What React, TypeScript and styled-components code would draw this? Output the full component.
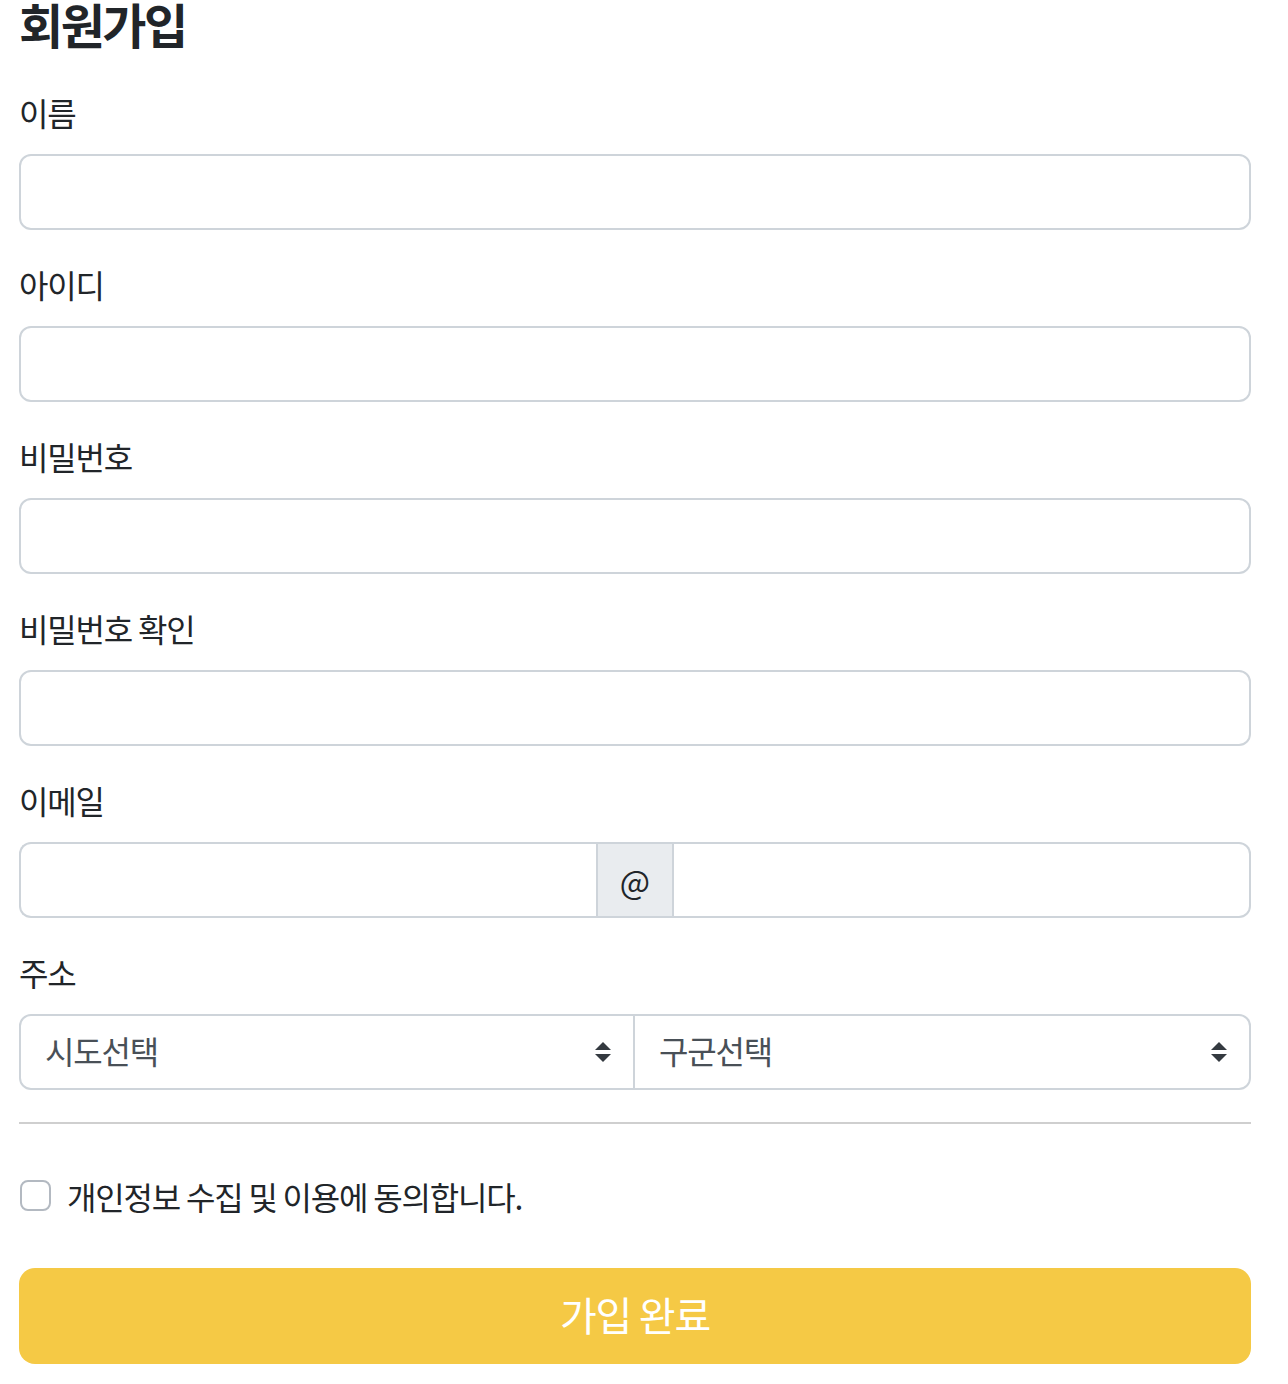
import styled, { createGlobalStyle } from "styled-components";

const GlobalStyle = createGlobalStyle`
  body {
    margin: 0;
    background: #fff;
    color: #212529;
    font-family: "Noto Sans CJK KR", "Noto Sans", sans-serif;
  }
  * { box-sizing: border-box; }
`;

// layout
const Container = styled.div`
  padding: 2px 37px 0 19px;
  overflow: hidden;
`;
const Title = styled.h1`
  margin: -7px 0 37px;
  font-size: 48px;
  font-weight: 700;
  line-height: 57.6px;
  letter-spacing: -2.5px;
  color: #212529;
`;
const Group = styled.div`
  margin-bottom: 32px;
`;
const Label = styled.label`
  display: block;
  margin-bottom: 16px;
  font-size: 32px;
  line-height: 44px;
  padding-bottom: 4px;
  letter-spacing: -1.2px;
  color: #212529;
`;
// inputs
const Input = styled.input<{ $side?: "left" | "right" }>`
  display: block;
  flex: 1;
  width: 100%;
  height: 76px;
  padding: 12px 24px;
  font-size: 32px;
  font-family: inherit;
  color: #495057;
  background: #fff;
  border: 2px solid #ced4da;
  border-radius: ${(p) =>
    p.$side === "left" ? "12px 0 0 12px" : p.$side === "right" ? "0 12px 12px 0" : "12px"};
  ${(p) => (p.$side === "left" ? "border-right: none;" : "")}
  ${(p) => (p.$side === "right" ? "border-left: none;" : "")}
  outline: none;
`;
const InputGroup = styled.div`
  display: flex;
  align-items: stretch;
`;
const Addon = styled.span`
  display: flex;
  align-items: center;
  justify-content: center;
  width: 78px;
  height: 76px;
  font-size: 32px;
  color: #212529;
  background: #e9ecef;
  border: 2px solid #ced4da;
`;
const SelectWrap = styled.div<{ $side: "left" | "right" }>`
  position: relative;
  flex: 1;
  svg {
    position: absolute;
    right: 24px;
    top: 28px;
    pointer-events: none;
  }
`;
const Select = styled.select<{ $side: "left" | "right" }>`
  appearance: none;
  width: 100%;
  height: 76px;
  padding: 0 64px 4px 24px;
  font-size: 32px;
  font-family: inherit;
  letter-spacing: -1.2px;
  color: #495057;
  background: #fff;
  border: 2px solid #ced4da;
  border-radius: ${(p) => (p.$side === "left" ? "12px 0 0 12px" : "0 12px 12px 0")};
  ${(p) => (p.$side === "right" ? "border-left: none;" : "")}
  outline: none;
`;
const Divider = styled.hr`
  margin: 32px 0 48px;
  border: 0;
  border-top: 2px solid #cfcfcf;
`;
// agree + submit
const Check = styled.label`
  display: flex;
  align-items: center;
  gap: 16px;
  margin-bottom: 48px;
  font-size: 32px;
  line-height: 48px;
  letter-spacing: -1.2px;
  color: #212529;
`;
const Box = styled.input`
  appearance: none;
  margin: 0 0 0 1px;
  width: 31px;
  height: 31px;
  border: 2px solid #b3b9c1;
  border-radius: 8px;
  background: #fff;
`;
const Submit = styled.button`
  display: block;
  width: 100%;
  height: 96px;
  padding-bottom: 4px;
  font-size: 40px;
  font-family: inherit;
  letter-spacing: -1.2px;
  color: #fff;
  background: #f5c945;
  border: none;
  border-radius: 16px;
`;

const Arrows = () => (
  <svg width="16" height="20" viewBox="0 0 4 5">
    <path fill="#343a40" d="M2 0L0 2h4zm0 5L0 3h4z" />
  </svg>
);

function App() {
  return (
    <Container>
      <GlobalStyle />
      <Title>회원가입</Title>
      <Group>
        <Label>이름</Label>
        <Input />
      </Group>
      <Group>
        <Label>아이디</Label>
        <Input />
      </Group>
      <Group>
        <Label>비밀번호</Label>
        <Input type="password" />
      </Group>
      <Group>
        <Label>비밀번호 확인</Label>
        <Input type="password" />
      </Group>
      <Group>
        <Label>이메일</Label>
        <InputGroup>
          <Input $side="left" />
          <Addon>@</Addon>
          <Input $side="right" />
        </InputGroup>
      </Group>
      <div>
        <Label>주소</Label>
        <InputGroup>
          <SelectWrap $side="left">
            <Select $side="left">
              <option>시도선택</option>
            </Select>
            <Arrows />
          </SelectWrap>
          <SelectWrap $side="right">
            <Select $side="right">
              <option>구군선택</option>
            </Select>
            <Arrows />
          </SelectWrap>
        </InputGroup>
      </div>
      <Divider />
      <Check>
        <Box type="checkbox" />
        개인정보 수집 및 이용에 동의합니다.
      </Check>
      <Submit>가입 완료</Submit>
    </Container>
  );
}
export default App;
